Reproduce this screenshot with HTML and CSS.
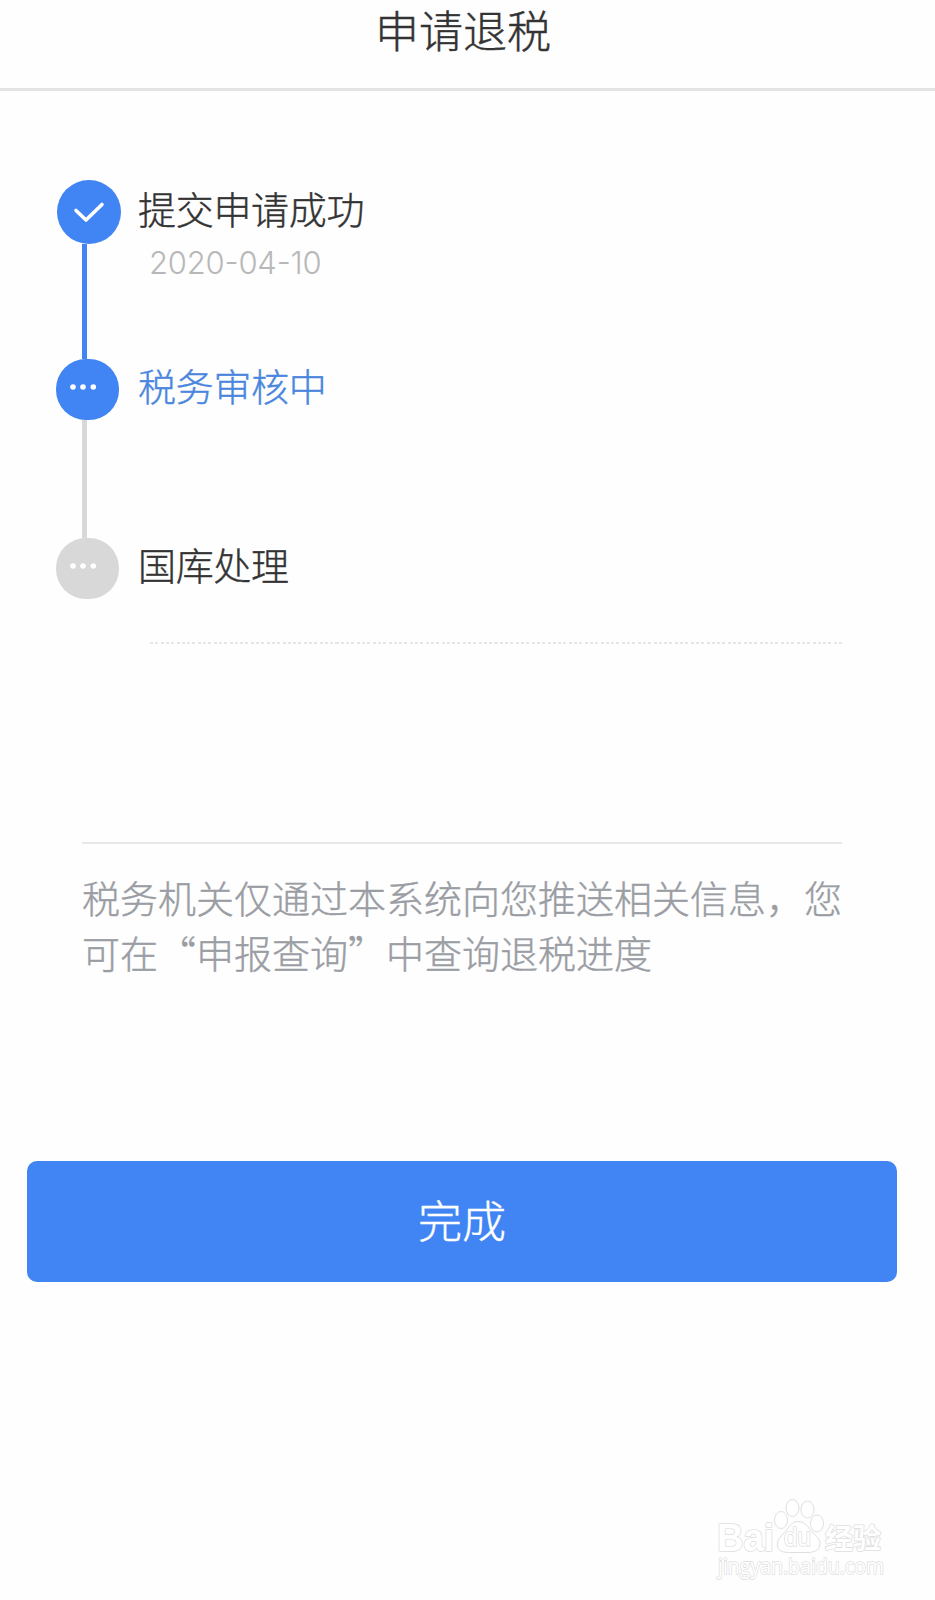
FILE: index.html
```html
<!DOCTYPE html>
<html lang="zh-CN">
<head>
    <meta charset="UTF-8">
    <meta name="viewport" content="width=device-width, initial-scale=1.0">
    <title>申请退税</title>
    <link rel="stylesheet" href="styles.css">
</head>
<body>
    <header class="header">
        <h1>申请退税</h1>
    </header>

    <main class="content">
        <ul class="steps">
            <li class="step">
                <div class="step-track">
                    <svg class="step-icon step-icon-done" viewBox="0 0 64 64">
                        <circle cx="32" cy="32" r="32" fill="#4184f3"/>
                        <path d="M19 30.5 L29 40 L45 24.500" fill="none" stroke="#fff" stroke-width="3.6" stroke-linecap="round" stroke-linejoin="round"/>
                    </svg>
                    <span class="step-line step-line-active"></span>
                </div>
                <div class="step-text step-text-done">
                    <p class="step-title">提交申请成功</p>
                    <p class="step-date">2020-04-10</p>
                </div>
            </li>
            <li class="step">
                <div class="step-track">
                    <svg class="step-icon" viewBox="0 0 63 61">
                        <rect width="63" height="61" rx="30" fill="#4184f3"/>
                        <g fill="#fff">
                            <circle cx="17" cy="28" r="2.8"/>
                            <circle cx="27" cy="28" r="2.8"/>
                            <circle cx="37.3" cy="28" r="2.8"/>
                        </g>
                    </svg>
                    <span class="step-line"></span>
                </div>
                <div class="step-text">
                    <p class="step-title step-title-active">税务审核中</p>
                </div>
            </li>
            <li class="step step-last">
                <div class="step-track">
                    <svg class="step-icon" viewBox="0 0 63 61">
                        <rect width="63" height="61" rx="30" fill="#d8d8d8"/>
                        <g fill="#fff">
                            <circle cx="17" cy="28" r="2.8"/>
                            <circle cx="27" cy="28" r="2.8"/>
                            <circle cx="37.3" cy="28" r="2.8"/>
                        </g>
                    </svg>
                </div>
                <div class="step-text">
                    <p class="step-title">国库处理</p>
                </div>
            </li>
        </ul>

        <div class="dotted"></div>

        <p class="notice">税务机关仅通过本系统向您推送相关信息，您可在“申报查询”中查询退税进度</p>

        <button type="button" class="btn">完成</button>
    </main>

    <footer class="footer">
        <svg class="watermark" viewBox="0 0 180 100">
            <text class="wm-brand" x="5" y="56" textLength="57" lengthAdjust="spacingAndGlyphs">Bai</text>
            <g class="wm-paw">
                <ellipse cx="69" cy="25" rx="6.5" ry="8.5"/>
                <ellipse cx="80.5" cy="13" rx="6.5" ry="8.5"/>
                <ellipse cx="95.5" cy="14.500" rx="6.5" ry="8.5"/>
                <ellipse cx="105" cy="28.500" rx="6.5" ry="8.5"/>
                <path d="M86 26.500 C93 26.500 96 32 100 37 C106 42 109 46 107.500 51 C105.500 58.500 97 57.500 86 57.500 C75 57.500 67 58.500 65.500 51 C64.500 45 69 41 74 36 C78 31 80 26.500 86 26.500 Z"/>
            </g>
            <text class="wm-du" x="72" y="51" textLength="27" lengthAdjust="spacingAndGlyphs">du</text>
            <text class="wm-cn" x="113" y="54">经验</text>
            <text class="wm-url" x="6" y="79" textLength="166" lengthAdjust="spacingAndGlyphs">jingyan.baidu.com</text>
        </svg>
    </footer>
</body>
</html>
```

FILE: styles.css
```css
* {
    box-sizing: border-box;
}
body {
    margin: 0;
    min-height: 1600px;
    display: flex;
    flex-direction: column;
    background: #fefefe;
    color: #333;
    font-family: "Noto Sans CJK SC", sans-serif;
    font-weight: 300;
    -webkit-text-stroke: 0.4px;
}
h1, p, ul {
    margin: 0;
    padding: 0;
}
.header {
    height: 91px;
    padding-right: 9px;
    border-bottom: 3px solid #e4e4e4;
    text-align: center;
}
.header h1 {
    font-size: 44px;
    font-weight: 300;
    line-height: 58px;
}
.content {
    padding: 89px 38px 0 27px;
}
.steps {
    list-style: none;
    padding-left: 29px;
}
.step {
    display: flex;
    height: 179px;
}
.step-last {
    height: 61px;
}
.step-track {
    width: 64px;
    display: flex;
    flex-direction: column;
}
.step-icon {
    width: 63px;
    height: 61px;
    flex: none;
}
.step-icon-done {
    width: 64px;
    height: 64px;
    margin-left: 1px;
}
.step-line {
    width: 5px;
    flex: 1;
    margin-left: 26px;
    background: #d8d8d8;
}
.step-line-active {
    background: #4184f3;
}
.step-text {
    padding-left: 18px;
}
.step-title {
    font-size: 38px;
    line-height: 52px;
    letter-spacing: -0.3px;
}
.step-text-done .step-title {
    line-height: 56px;
}
.step-title-active {
    color: #4a86dd;
}
.step-date {
    padding-left: 11px;
    color: #b8b8b8;
    font-family: Inter, sans-serif;
    font-size: 31px;
    font-feature-settings: "case";
    line-height: 54px;
    letter-spacing: -0.2px;
    -webkit-text-stroke: 0;
}
.dotted {
    height: 2px;
    margin: 43px 55px 0 123px;
    background: repeating-linear-gradient(to right, #e6e6e6 0, #e6e6e6 3px, transparent 3px, transparent 5.3px);
}
.notice {
    margin: 198px 55px 0 55px;
    padding-top: 25px;
    border-top: 2px solid #e8e8e8;
    color: #9a9da3;
    font-size: 38px;
    line-height: 55px;
    word-break: break-all;
}
.btn {
    display: block;
    width: 100%;
    height: 121px;
    margin-top: 182px;
    padding: 0 0 6px;
    border: none;
    border-radius: 10px;
    background: #4184f3;
    color: #fff;
    font-family: inherit;
    font-size: 44px;
    font-weight: 300;
}
.footer {
    display: flex;
    justify-content: flex-end;
    margin-top: auto;
    padding: 0 43px 5px 0;
}
.watermark {
    width: 180px;
    height: 100px;
    fill: #fff;
    stroke: #dfdfdf;
    stroke-width: 1.6px;
    stroke-linejoin: round;
    paint-order: stroke;
    -webkit-text-stroke: 0;
}
.wm-paw {
    stroke-width: 1px;
    paint-order: normal;
}
.wm-brand {
    font: bold 38px "Liberation Sans", sans-serif;
}
.wm-du {
    font: 25px "Liberation Sans", sans-serif;
}
.wm-cn {
    font: bold 28px "Noto Sans CJK SC", sans-serif;
}
.wm-url {
    font: 22px "Open Sans", sans-serif;
}
```
